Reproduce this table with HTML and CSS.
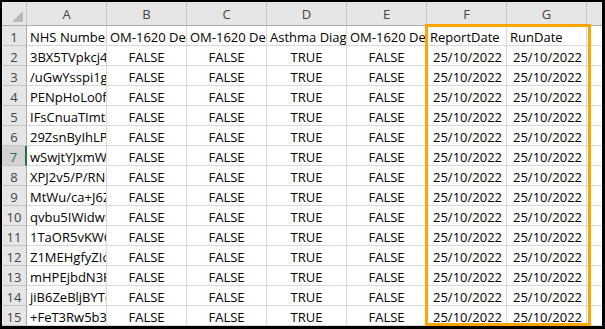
FILE: index.html
```html
<!DOCTYPE html>
<html>
<head>
<meta charset="utf-8">
<link rel="stylesheet" href="styles.css">
</head>
<body>
<div class="frame">
<div class="sheet">
  <div class="c hd corner"><span class="tri"></span></div>
  <div class="c hd">A</div><div class="c hd">B</div><div class="c hd">C</div><div class="c hd">D</div><div class="c hd">E</div><div class="c hd">F</div><div class="c hd">G</div><div class="c hd end"></div>

  <div class="c rh">1</div><div class="c">NHS Number</div><div class="c">OM-1620 Details</div><div class="c">OM-1620 Details</div><div class="c">Asthma Diagnosis</div><div class="c">OM-1620 Details</div><div class="c">ReportDate</div><div class="c">RunDate</div><div class="c end"></div>

  <div class="c rh">2</div><div class="c">3BX5TVpkcj4Qx</div><div class="c m">FALSE</div><div class="c m">FALSE</div><div class="c m">TRUE</div><div class="c m">FALSE</div><div class="c r">25/10/2022</div><div class="c r">25/10/2022</div><div class="c end"></div>
  <div class="c rh">3</div><div class="c">/uGwYsspi1gQ</div><div class="c m">FALSE</div><div class="c m">FALSE</div><div class="c m">TRUE</div><div class="c m">FALSE</div><div class="c r">25/10/2022</div><div class="c r">25/10/2022</div><div class="c end"></div>
  <div class="c rh">4</div><div class="c">PENpHoLo0fK</div><div class="c m">FALSE</div><div class="c m">FALSE</div><div class="c m">TRUE</div><div class="c m">FALSE</div><div class="c r">25/10/2022</div><div class="c r">25/10/2022</div><div class="c end"></div>
  <div class="c rh">5</div><div class="c">IFsCnuaTImtc</div><div class="c m">FALSE</div><div class="c m">FALSE</div><div class="c m">TRUE</div><div class="c m">FALSE</div><div class="c r">25/10/2022</div><div class="c r">25/10/2022</div><div class="c end"></div>
  <div class="c rh">6</div><div class="c">29ZsnByIhLPq</div><div class="c m">FALSE</div><div class="c m">FALSE</div><div class="c m">TRUE</div><div class="c m">FALSE</div><div class="c r">25/10/2022</div><div class="c r">25/10/2022</div><div class="c end"></div>
  <div class="c rh sel">7</div><div class="c">wSwjtYJxmWk</div><div class="c m">FALSE</div><div class="c m">FALSE</div><div class="c m">TRUE</div><div class="c m">FALSE</div><div class="c r">25/10/2022</div><div class="c r">25/10/2022</div><div class="c end"></div>
  <div class="c rh">8</div><div class="c">XPJ2v5/P/RNe</div><div class="c m">FALSE</div><div class="c m">FALSE</div><div class="c m">TRUE</div><div class="c m">FALSE</div><div class="c r">25/10/2022</div><div class="c r">25/10/2022</div><div class="c end"></div>
  <div class="c rh">9</div><div class="c">MtWu/ca+J6Zk</div><div class="c m">FALSE</div><div class="c m">FALSE</div><div class="c m">TRUE</div><div class="c m">FALSE</div><div class="c r">25/10/2022</div><div class="c r">25/10/2022</div><div class="c end"></div>
  <div class="c rh">10</div><div class="c">qvbu5IWidwR</div><div class="c m">FALSE</div><div class="c m">FALSE</div><div class="c m">TRUE</div><div class="c m">FALSE</div><div class="c r">25/10/2022</div><div class="c r">25/10/2022</div><div class="c end"></div>
  <div class="c rh">11</div><div class="c">1TaOR5vKWCe</div><div class="c m">FALSE</div><div class="c m">FALSE</div><div class="c m">TRUE</div><div class="c m">FALSE</div><div class="c r">25/10/2022</div><div class="c r">25/10/2022</div><div class="c end"></div>
  <div class="c rh">12</div><div class="c">Z1MEHgfyZIcQ</div><div class="c m">FALSE</div><div class="c m">FALSE</div><div class="c m">TRUE</div><div class="c m">FALSE</div><div class="c r">25/10/2022</div><div class="c r">25/10/2022</div><div class="c end"></div>
  <div class="c rh">13</div><div class="c">mHPEjbdN3Fx</div><div class="c m">FALSE</div><div class="c m">FALSE</div><div class="c m">TRUE</div><div class="c m">FALSE</div><div class="c r">25/10/2022</div><div class="c r">25/10/2022</div><div class="c end"></div>
  <div class="c rh">14</div><div class="c">jiB6ZeBljBYTq</div><div class="c m">FALSE</div><div class="c m">FALSE</div><div class="c m">TRUE</div><div class="c m">FALSE</div><div class="c r">25/10/2022</div><div class="c r">25/10/2022</div><div class="c end"></div>
  <div class="c rh">15</div><div class="c">+FeT3Rw5b3Kd</div><div class="c m">FALSE</div><div class="c m">FALSE</div><div class="c m">TRUE</div><div class="c m">FALSE</div><div class="c r">25/10/2022</div><div class="c r">25/10/2022</div><div class="c end"></div>

  <div class="highlight"></div>
</div>
</div>
</body>
</html>
```

FILE: styles.css
```css
html, body {
  margin: 0;
  padding: 0;
  background: #000;
}
body {
  width: 605px;
  height: 329px;
  overflow: hidden;
}
.frame {
  padding: 2px 3px 3px 2px;
}
.sheet {
  position: relative;
  display: grid;
  grid-template-columns: 25px repeat(7, 80px) 15px;
  grid-template-rows: 24px repeat(15, 20px);
  background: #fff;
  font-family: "Open Sans", "Liberation Sans", sans-serif;
  font-size: 13px;
  color: #000;
}
.c {
  box-sizing: border-box;
  border-right: 1px solid #d9d9d9;
  border-bottom: 1px solid #d9d9d9;
  padding: 2px 3px 0;
  line-height: 18px;
  white-space: nowrap;
  overflow: hidden;
}
.m { text-align: center; }
.r { text-align: right; padding-right: 4px; }
.hd {
  background: #e6e6e6;
  color: #444;
  text-align: center;
  padding: 0;
  line-height: 24px;
  border-right-color: #c6c6c6;
  border-bottom-color: #ababab;
}
.rh {
  background: #e6e6e6;
  color: #444;
  text-align: center;
  padding: 2px 0 0;
  border-right-color: #ababab;
  border-bottom-color: #c6c6c6;
}
.rh.sel {
  background: #d2d2d2;
  color: #217346;
  border-right: 2px solid #217346;
}
.end { border-right: none; }
.corner {
  position: relative;
}
.tri {
  position: absolute;
  right: 3px;
  bottom: 3px;
  width: 11px;
  height: 11px;
  background: #b8b8b8;
  clip-path: polygon(100% 0, 100% 100%, 0 100%);
}
.highlight {
  position: absolute;
  left: 423px;
  top: 22px;
  width: 166px;
  height: 302px;
  box-sizing: border-box;
  border: 3px solid #ffa500;
  pointer-events: none;
}
```
